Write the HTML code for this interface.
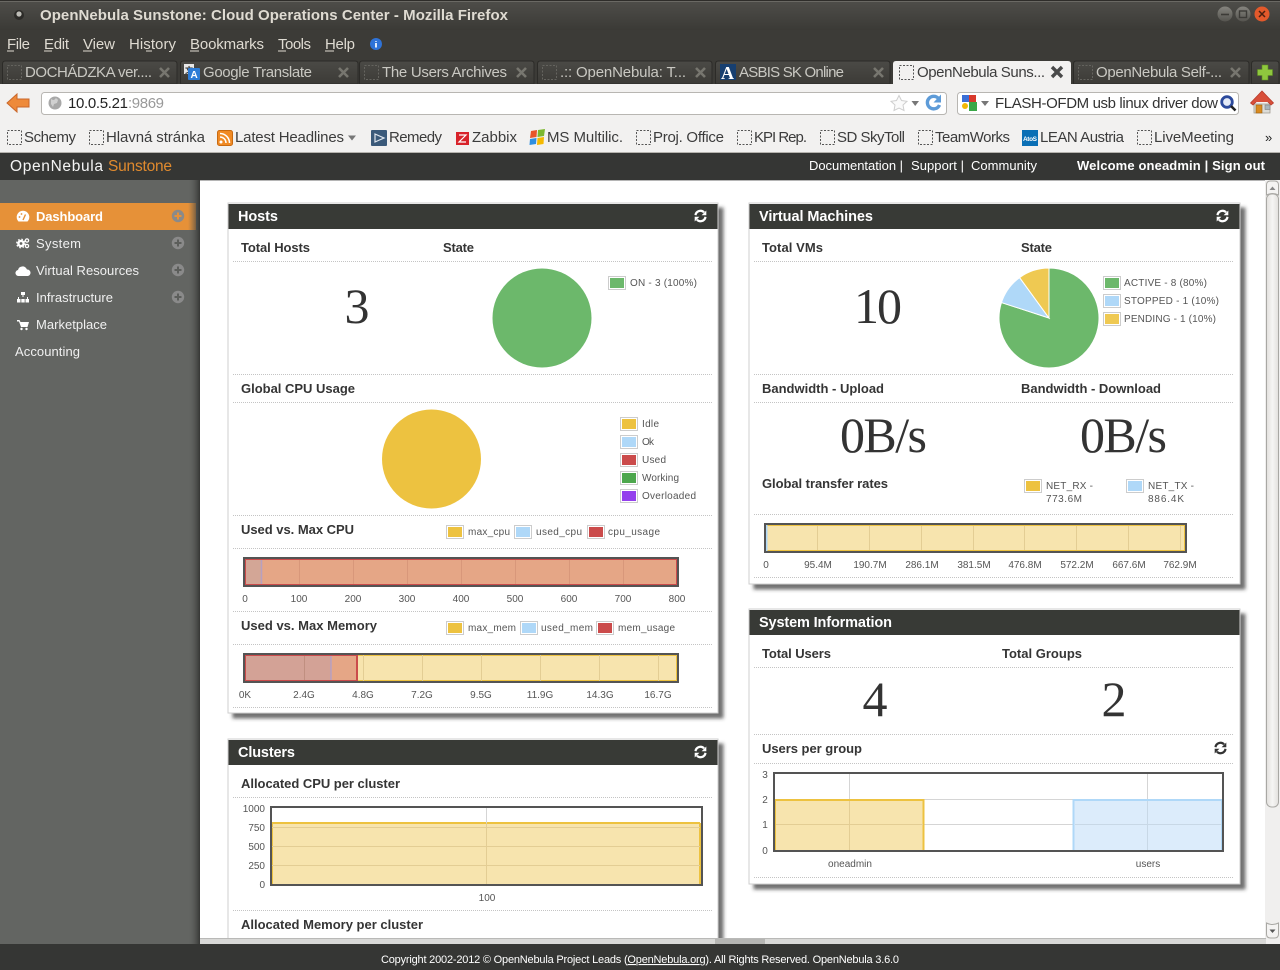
<!DOCTYPE html>
<html><head><meta charset="utf-8"><title>OpenNebula Sunstone: Cloud Operations Center - Mozilla Firefox</title>
<style>
html,body{margin:0;padding:0;background:#fff;overflow:hidden}
svg{display:block}
text{font-family:"Liberation Sans",sans-serif}
.ch{font-size:15px;fill:#dfdbd2}
.tb{font-size:15px;fill:#c9c8c2}
.bm{font-size:15px;fill:#3c3c3c}
.nav{font-size:13px;fill:#f0f0f0}
.hl{font-size:13px;fill:#fff}
.tt{font-size:14.5px;font-weight:bold;fill:#fff}
.sh{font-size:13px;font-weight:bold;fill:#353535}
.lb{font-size:10px;fill:#555}
.mid{text-anchor:middle}
.big{font-family:"Liberation Serif",serif;font-size:50px;fill:#333}
.dot{stroke:#c4c4c4;stroke-width:1;stroke-dasharray:1 1;fill:none}
.sw{fill:#fff;stroke:#ccc;stroke-width:1}
.dash{fill:none;stroke:#555;stroke-width:1;stroke-dasharray:2 1.5}
.dashd{fill:none;stroke:#65645f;stroke-width:1;stroke-dasharray:2 1.5}
.x{stroke:#77766f;stroke-width:2.6;stroke-linecap:butt}
</style></head><body>
<svg xmlns="http://www.w3.org/2000/svg" width="1280" height="970" viewBox="0 0 1280 970">
<defs>
<linearGradient id="tbg" x1="0" y1="0" x2="0" y2="1"><stop offset="0" stop-color="#4f4e4a"/><stop offset="1" stop-color="#3b3a36"/></linearGradient>
<linearGradient id="sd" x1="0" y1="0" x2="1" y2="0"><stop offset="0" stop-color="#636562" stop-opacity="0"/><stop offset="1" stop-color="#353634"/></linearGradient>
<linearGradient id="ti" x1="0" y1="0" x2="0" y2="1"><stop offset="0" stop-color="#4b4a46"/><stop offset="1" stop-color="#3c3b37"/></linearGradient>
<linearGradient id="sb" x1="0" y1="0" x2="1" y2="0"><stop offset="0" stop-color="#e2e0dd"/><stop offset=".5" stop-color="#f6f5f4"/><stop offset="1" stop-color="#e2e0dd"/></linearGradient>
<linearGradient id="btn" x1="0" y1="0" x2="0" y2="1"><stop offset="0" stop-color="#85847e"/><stop offset="1" stop-color="#55544f"/></linearGradient>
<filter id="s" x="-5%" y="-5%" width="110%" height="110%"><feDropShadow dx="5" dy="5" stdDeviation="1.800" flood-color="#333" flood-opacity=".7"/></filter>
<g id="rf"><path d="M-5 -.8A5 5 0 0 1 3.600 -3.600" fill="none" stroke-width="2.200" stroke="currentColor"/><path d="M5.800 -5.500V-.8H1.100Z" fill="currentColor"/><path d="M5 .8A5 5 0 0 1 -3.600 3.600" fill="none" stroke-width="2.200" stroke="currentColor"/><path d="M-5.800 5.500V.8H-1.100Z" fill="currentColor"/></g>
<g id="pl"><circle r="6.200" fill="#8a8a8a"/><path d="M-3.500 0H3.500M0 -3.500V3.500" stroke="#5c5e5b" stroke-width="2"/></g>
</defs>

<!-- Window chrome -->
<rect width="1280" height="84" fill="#3c3b37"/>
<rect y="0" width="1280" height="30" fill="url(#tbg)"/>
<rect y="0" width="1280" height="1" fill="#2e2d2a"/>
<rect y="1" width="1280" height="1" fill="#6a6964"/>
<circle cx="19" cy="15" r="5" fill="#2c2b28"/><circle cx="19" cy="14" r="2.600" fill="#bdbcb6"/>
<text x="40" y="20" textLength="468" style="font-size:15px;font-weight:bold;fill:#dfdbd2">OpenNebula Sunstone: Cloud Operations Center - Mozilla Firefox</text>
<circle cx="1225" cy="14" r="7.500" fill="url(#btn)"/><path d="M1221 14.500H1229" stroke="#3c3b37" stroke-width="1.600"/>
<circle cx="1243" cy="14" r="7.500" fill="url(#btn)"/><rect x="1239.500" y="11" width="7" height="6.500" fill="none" stroke="#3c3b37" stroke-width="1.400"/>
<circle cx="1262" cy="14" r="7.500" fill="#e2592b"/><path d="M1259 11L1265 17M1265 11L1259 17" stroke="#4a2010" stroke-width="1.500"/>

<text x="7" y="49" class="ch" textLength="23">File</text><path d="M7 51H14" stroke="#dfdbd2"/>
<text x="44" y="49" class="ch" textLength="25">Edit</text><path d="M44 51H52" stroke="#dfdbd2"/>
<text x="83" y="49" class="ch" textLength="32">View</text><path d="M83 51H92" stroke="#dfdbd2"/>
<text x="129" y="49" class="ch" textLength="47">History</text><path d="M146 51H152" stroke="#dfdbd2"/>
<text x="190" y="49" class="ch" textLength="74">Bookmarks</text><path d="M190 51H199" stroke="#dfdbd2"/>
<text x="278" y="49" class="ch" textLength="33">Tools</text><path d="M278 51H286" stroke="#dfdbd2"/>
<text x="325" y="49" class="ch" textLength="30">Help</text><path d="M325 51H334" stroke="#dfdbd2"/>
<circle cx="376" cy="44" r="6" fill="#2f73d8"/><path d="M376 41V41.800M376 43V47.500" stroke="#fff" stroke-width="1.700"/>

<!-- Tabs -->
<g stroke="#2c2b28" stroke-width="1" fill="url(#ti)">
<path d="M2.500 84V64q0-3 3-3H174q3 0 3 3V84Z"/>
<path d="M180.500 84V64q0-3 3-3H355q3 0 3 3V84Z"/>
<path d="M359.500 84V64q0-3 3-3H531q3 0 3 3V84Z"/>
<path d="M537.500 84V64q0-3 3-3H709q3 0 3 3V84Z"/>
<path d="M715.500 84V64q0-3 3-3H887q3 0 3 3V84Z"/>
<path d="M1073.500 84V64q0-3 3-3H1246q3 0 3 3V84Z"/>
<path d="M1251.500 84V64q0-3 3-3H1276q3 0 3 3V84Z"/>
</g>
<path d="M893 84V64q0-3 3-3H1068q3 0 3 3V84Z" fill="#f2f1f0"/>
<rect x="7.500" y="65.500" width="14" height="14" class="dashd"/>
<rect x="364.500" y="65.500" width="14" height="14" class="dashd"/>
<rect x="542.500" y="65.500" width="14" height="14" class="dashd"/>
<rect x="1078.500" y="65.500" width="14" height="14" class="dashd"/>
<rect x="899.500" y="65.500" width="14" height="14" class="dash"/>
<text x="25" y="77" class="tb" textLength="127">DOCHÁDZKA ver....</text>
<text x="203" y="77" class="tb" textLength="109">Google Translate</text>
<text x="382" y="77" class="tb" textLength="125">The Users Archives</text>
<text x="560" y="77" class="tb" textLength="126">.:: OpenNebula: T...</text>
<text x="739" y="77" class="tb" textLength="105">ASBIS SK Online</text>
<text x="917" y="77" textLength="128" style="font-size:15px;fill:#3c3c3c">OpenNebula Suns...</text>
<text x="1096" y="77" class="tb" textLength="126">OpenNebula Self-...</text>
<g class="x">
<path d="M160 68L169 77M169 68L160 77"/><path d="M339 68L348 77M348 68L339 77"/><path d="M517 68L526 77M526 68L517 77"/><path d="M696 68L705 77M705 68L696 77"/><path d="M874 68L883 77M883 68L874 77"/><path d="M1231 68L1240 77M1240 68L1231 77"/>
</g>
<path d="M1052 67L1062 77M1062 67L1052 77" stroke="#4a4a4a" stroke-width="3.400"/>
<!-- translate icon -->
<rect x="184" y="64" width="10" height="10" fill="#e8e8e8"/><text x="185" y="73" style="font-family:'Noto Sans CJK SC',sans-serif;font-size:8px;fill:#333;font-weight:bold">文</text>
<rect x="188" y="68" width="12" height="12" rx="1" fill="#2d7cd6"/><text x="190.500" y="78" style="font-size:10px;font-weight:bold;fill:#fff">A</text>
<!-- ASBIS icon -->
<rect x="720" y="64" width="16" height="16" fill="#173f70"/><text x="721" y="79" style="font-family:'Liberation Serif',serif;font-size:18px;font-weight:bold;fill:#fff">A</text>
<!-- plus -->
<path d="M1262 65H1268V69.500H1272.500V75.500H1268V80H1262V75.500H1257.500V69.500H1262Z" fill="#8fc73e" stroke="#5f8f20" stroke-width=".6"/>

<!-- Nav bar -->
<rect y="84" width="1280" height="69" fill="#f2f1f0"/>
<path d="M7 103L17 94V99H29V107H17V112Z" fill="#ee8a3a" stroke="#c9662a" stroke-width="1"/>
<rect x="41.500" y="92.500" width="905" height="22" rx="3" fill="#fff" stroke="#b8b6b2"/>
<circle cx="55" cy="103" r="6.500" fill="#a8a8a8"/><path d="M51 99q3 2 4 0t3 1l-1 3-3 1-1 3-2-3Z" fill="#d0d0d0"/>
<text x="68" y="108" textLength="60" style="font-size:15px;fill:#222">10.0.5.21</text>
<text x="128" y="108" textLength="36" style="font-size:15px;fill:#999">:9869</text>
<path d="M899 95.500L901.500 100.500L907 101.300L903 105L904 110.500L899 108L894 110.500L895 105L891 101.300L896.500 100.500Z" fill="#fafafa" stroke="#cfcfcf"/>
<path d="M911.500 101H919L915.200 106Z" fill="#777"/>
<path d="M938.500 98.500A6.300 6.300 0 1 0 939.500 105" fill="none" stroke="#5d9bd8" stroke-width="3.400"/>
<path d="M941 94.500V102.500H933.500Z" fill="#5d9bd8"/>
<rect x="957.500" y="92.500" width="281" height="22" rx="3" fill="#fff" stroke="#b8b6b2"/>
<rect x="962" y="95" width="7" height="7" fill="#3b6fd6"/><rect x="969" y="95" width="7" height="7" fill="#d8392b"/><circle cx="965" cy="106" r="3" fill="#f2b705"/><rect x="969" y="102" width="8" height="9" fill="#3aa847"/>
<path d="M981 101H989L985 106Z" fill="#777"/>
<text x="995" y="108" textLength="223" style="font-size:15px;fill:#333">FLASH-OFDM usb linux driver dow</text>
<circle cx="1227" cy="102" r="5.300" fill="#e4eaf7" stroke="#2c4a9c" stroke-width="2.800"/><path d="M1231 106L1235.500 110.500" stroke="#222" stroke-width="2.600"/>
<path d="M1254 104V113H1270V104Z" fill="#dcdcd8" stroke="#a09c90" stroke-width=".8"/>
<path d="M1250.500 103L1262 91L1273.500 103L1271 105L1262 96L1253 105Z" fill="#d84f3a" stroke="#b83a2a" stroke-width=".8"/>
<path d="M1262 93.500L1270 102H1254Z" fill="#d84f3a"/>
<rect x="1256" y="105" width="6" height="8" fill="#d98a1e" stroke="#9c6010" stroke-width=".6"/>
<rect x="1265" y="105" width="5" height="4.500" fill="#a8b4bc" stroke="#808080" stroke-width=".6"/>

<!-- Bookmarks -->
<g>
<rect x="7.500" y="130.500" width="14" height="14" class="dash"/><text x="24" y="142" class="bm" textLength="52">Schemy</text>
<rect x="89.500" y="130.500" width="14" height="14" class="dash"/><text x="106" y="142" class="bm" textLength="99">Hlavná stránka</text>
<rect x="217.500" y="130.500" width="15" height="15" rx="2" fill="#f08a24" stroke="#c96a10"/><circle cx="221" cy="142" r="1.500" fill="#fff"/><path d="M220 137a6 6 0 0 1 6 6M220 133.500a9.500 9.500 0 0 1 9.500 9.500" fill="none" stroke="#fff" stroke-width="1.500"/>
<text x="235" y="142" class="bm" textLength="109">Latest Headlines</text><path d="M348 135.500H356L352 140.500Z" fill="#777"/>
<rect x="371" y="130" width="16" height="16" rx="1" fill="#3b5a7a"/><path d="M375 134L384 138L375 142Z" fill="none" stroke="#dfe6ee" stroke-width="1.200"/>
<text x="389" y="142" class="bm" textLength="53">Remedy</text>
<rect x="456" y="132" width="13" height="13" fill="#d8232a"/><path d="M459 135H466L459 142H466" fill="none" stroke="#fff" stroke-width="1.200"/>
<text x="472" y="142" class="bm" textLength="45">Zabbix</text>
<path d="M531 131L537 130L536.500 137L530 138Z" fill="#e8562a"/><path d="M538 130L545 129L544 136L537.500 137Z" fill="#7cb82f"/><path d="M530 139L536.500 138L536 144L529.500 145Z" fill="#2f8fe0"/><path d="M537.500 138L544 137L543.500 144L537 145Z" fill="#f5b900"/>
<text x="547" y="142" class="bm" textLength="76">MS Multilic.</text>
<rect x="636.500" y="130.500" width="14" height="14" class="dash"/><text x="653" y="142" class="bm" textLength="71">Proj. Office</text>
<rect x="737.500" y="130.500" width="14" height="14" class="dash"/><text x="754" y="142" class="bm" textLength="53">KPI Rep.</text>
<rect x="820.500" y="130.500" width="14" height="14" class="dash"/><text x="837" y="142" class="bm" textLength="68">SD SkyToll</text>
<rect x="918.500" y="130.500" width="14" height="14" class="dash"/><text x="935" y="142" class="bm" textLength="75">TeamWorks</text>
<rect x="1022" y="130" width="16" height="16" fill="#0a6fb5"/><text x="1023" y="141" textLength="14" style="font-size:6.500px;font-weight:bold;fill:#fff">AtoS</text>
<text x="1040" y="142" class="bm" textLength="84">LEAN Austria</text>
<rect x="1137.500" y="130.500" width="14" height="14" class="dash"/><text x="1154" y="142" class="bm" textLength="80">LiveMeeting</text>
<text x="1265" y="142" style="font-size:13px;fill:#222">»</text>
</g>
<rect y="152" width="1280" height="1" fill="#b5b3ae"/>

<!-- Sunstone header -->
<rect y="153" width="1280" height="27" fill="#353634"/>
<text x="10" y="171" textLength="93" style="font-size:15.500px;fill:#f4f4f4">OpenNebula</text>
<text x="108" y="171" textLength="64" style="font-size:15.500px;fill:#e08a2e">Sunstone</text>
<text x="809" y="170" class="hl" textLength="94">Documentation |</text>
<text x="911" y="170" class="hl" textLength="53">Support |</text>
<text x="971" y="170" class="hl" textLength="66">Community</text>
<text x="1077" y="170" class="hl" textLength="188" style="font-weight:bold">Welcome oneadmin | Sign out</text>

<!-- Main + sidebar -->
<rect x="200" y="180" width="1066" height="760" fill="#fff"/>
<rect x="200" y="180" width="1066" height="1" fill="#b5b5b5"/>
<rect y="180" width="200" height="764" fill="#636562"/>
<rect y="203" width="196" height="27" fill="#e69138"/>
<rect x="188" y="180" width="12" height="764" fill="url(#sd)"/>
<text x="36" y="221" textLength="67" class="nav" style="font-weight:bold;fill:#fff">Dashboard</text>
<text x="36" y="248" textLength="45" class="nav">System</text>
<text x="36" y="275" textLength="103" class="nav">Virtual Resources</text>
<text x="36" y="302" textLength="77" class="nav">Infrastructure</text>
<text x="36" y="329" textLength="71" class="nav">Marketplace</text>
<text x="15" y="356" textLength="65" class="nav">Accounting</text>
<g><circle cx="178" cy="216" r="6.200" fill="#8a8a8a"/><path d="M174.500 216H181.500M178 212.500V219.500" stroke="#e69138" stroke-width="2"/></g>
<use href="#pl" x="178" y="243"/><use href="#pl" x="178" y="270"/><use href="#pl" x="178" y="297"/>
<!-- sidebar icons -->
<path d="M18.500 221.500A6.300 6.300 0 1 1 27.500 221.500Z" fill="#fff"/><path d="M23 220L25.500 214.500" stroke="#e69138" stroke-width="1.400"/><circle cx="19.500" cy="217" r=".9" fill="#e69138"/><circle cx="21.500" cy="214" r=".9" fill="#e69138"/>
<circle cx="21" cy="243.500" r="2.600" fill="none" stroke="#fff" stroke-width="2.400"/><circle cx="21" cy="243.500" r="4.300" fill="none" stroke="#fff" stroke-width="1.200" stroke-dasharray="1.700 1.700"/><circle cx="27" cy="240.500" r="1.600" fill="none" stroke="#fff" stroke-width="1.300"/><circle cx="27" cy="246" r="1.600" fill="none" stroke="#fff" stroke-width="1.300"/>
<path d="M19 276a3 3 0 0 1-1-6a4.500 4.500 0 0 1 4-3.500a4.500 4.500 0 0 1 5 3a3.300 3.300 0 0 1 1 6.500Z" fill="#fff"/>
<path d="M21 292H25V295H21ZM22.500 295H23.500V297H28V299H27V297H19V299H18V297H22.500Z" fill="#fff"/><path d="M17 299H20.500V302.500H17ZM21.300 299H24.700V302.500H21.300ZM25.500 299H29V302.500H25.500Z" fill="#fff"/>
<path d="M17 320H19.500L20.500 322H29L27.500 327H21L19 321.500H17Z" fill="#fff"/><circle cx="21.500" cy="329" r="1.200" fill="#fff"/><circle cx="26.500" cy="329" r="1.200" fill="#fff"/>

<!-- Hosts -->
<rect x="228" y="203" width="490" height="510" fill="#fff" stroke="#cfcfcf" filter="url(#s)"/>
<rect x="228.500" y="204" width="489" height="25" fill="#383a36"/>
<text x="238" y="221" class="tt" textLength="40">Hosts</text>
<g transform="translate(700.500 216)" style="color:#fff"><use href="#rf"/></g>
<text x="241" y="252" class="sh" textLength="69">Total Hosts</text>
<text x="443" y="252" class="sh" textLength="31">State</text>
<path class="dot" d="M233 261.500H712M233 374.500H712M233 402.500H712M233 515.500H712M233 548.500H712M233 611.500H712M233 644.500H712M233 707.500H712"/>
<text x="357" y="323" class="big mid" textLength="24">3</text>
<circle cx="542" cy="318" r="49.500" fill="#6cb86b"/>
<rect x="608.500" y="276.500" width="17" height="13" class="sw"/><rect x="610" y="278" width="14" height="10" fill="#6cb86b"/>
<text x="630" y="286" class="lb" textLength="67">ON - 3 (100%)</text>
<text x="241" y="393" class="sh" textLength="114">Global CPU Usage</text>
<circle cx="431.500" cy="459" r="49.500" fill="#edc240"/>
<g>
<rect x="620.500" y="417.500" width="17" height="13" class="sw"/><rect x="622" y="419" width="14" height="10" fill="#edc240"/>
<rect x="620.500" y="435.500" width="17" height="13" class="sw"/><rect x="622" y="437" width="14" height="10" fill="#afd8f8"/>
<rect x="620.500" y="453.500" width="17" height="13" class="sw"/><rect x="622" y="455" width="14" height="10" fill="#cb4b4b"/>
<rect x="620.500" y="471.500" width="17" height="13" class="sw"/><rect x="622" y="473" width="14" height="10" fill="#4da74d"/>
<rect x="620.500" y="489.500" width="17" height="13" class="sw"/><rect x="622" y="491" width="14" height="10" fill="#9440ed"/>
</g>
<text x="642" y="427" class="lb" textLength="17">Idle</text>
<text x="642" y="445" class="lb" textLength="12">Ok</text>
<text x="642" y="463" class="lb" textLength="24">Used</text>
<text x="642" y="481" class="lb" textLength="37">Working</text>
<text x="642" y="499" class="lb" textLength="54">Overloaded</text>

<text x="241" y="534" class="sh" textLength="113">Used vs. Max CPU</text>
<rect x="446.500" y="525.500" width="17" height="13" class="sw"/><rect x="448" y="527" width="14" height="10" fill="#edc240"/>
<text x="468" y="535" class="lb" textLength="42">max_cpu</text>
<rect x="514.500" y="525.500" width="17" height="13" class="sw"/><rect x="516" y="527" width="14" height="10" fill="#afd8f8"/>
<text x="536" y="535" class="lb" textLength="46">used_cpu</text>
<rect x="587.500" y="525.500" width="17" height="13" class="sw"/><rect x="589" y="527" width="14" height="10" fill="#cb4b4b"/>
<text x="608" y="535" class="lb" textLength="52">cpu_usage</text>
<!-- CPU bar -->
<rect x="244" y="558" width="434" height="28" fill="#e5a686"/>
<rect x="245" y="560" width="17" height="24" fill="#d3a696"/>
<path d="M261.500 560V584" stroke="#b8a0c0" stroke-width="1.500"/>
<path d="M299.500 559V585M353.500 559V585M407.500 559V585M461.500 559V585M515.500 559V585M569.500 559V585M623.500 559V585" stroke="#d8977a"/>
<rect x="245" y="559" width="432" height="26" fill="none" stroke="#cb4b4b" stroke-width="2"/>
<rect x="244" y="558" width="434" height="28" fill="none" stroke="#545454" stroke-width="2"/>
<g class="lb mid">
<text x="245" y="602">0</text><text x="299" y="602">100</text><text x="353" y="602">200</text><text x="407" y="602">300</text><text x="461" y="602">400</text><text x="515" y="602">500</text><text x="569" y="602">600</text><text x="623" y="602">700</text><text x="677" y="602">800</text>
</g>

<text x="241" y="630" class="sh" textLength="136">Used vs. Max Memory</text>
<rect x="446.500" y="621.500" width="17" height="13" class="sw"/><rect x="448" y="623" width="14" height="10" fill="#edc240"/>
<text x="468" y="631" class="lb" textLength="48">max_mem</text>
<rect x="520.500" y="621.500" width="17" height="13" class="sw"/><rect x="522" y="623" width="14" height="10" fill="#afd8f8"/>
<text x="541" y="631" class="lb" textLength="52">used_mem</text>
<rect x="596.500" y="621.500" width="17" height="13" class="sw"/><rect x="598" y="623" width="14" height="10" fill="#cb4b4b"/>
<text x="618" y="631" class="lb" textLength="57">mem_usage</text>
<!-- Mem bar -->
<rect x="244" y="654" width="434" height="28" fill="#f7e4ae"/>
<rect x="245" y="655" width="432" height="26" fill="none" stroke="#edc240" stroke-width="2"/>
<rect x="245" y="655" width="112" height="26" fill="#e5a686"/>
<rect x="245" y="656" width="86" height="24" fill="#d3a296"/>
<path d="M331 656V680" stroke="#b8a0c0" stroke-width="1.500"/>
<path d="M304.500 655V681" stroke="#c08f80"/>
<path d="M363.500 655V681M422.500 655V681M481.500 655V681M540.500 655V681M599.500 655V681M658.500 655V681" stroke="#e3cd94"/>
<rect x="245" y="655" width="112" height="26" fill="none" stroke="#cb4b4b" stroke-width="2"/>
<rect x="244" y="654" width="434" height="28" fill="none" stroke="#545454" stroke-width="2"/>
<g class="lb mid">
<text x="245" y="698">0K</text><text x="304" y="698">2.4G</text><text x="363" y="698">4.8G</text><text x="422" y="698">7.2G</text><text x="481" y="698">9.5G</text><text x="540" y="698">11.9G</text><text x="600" y="698">14.3G</text><text x="658" y="698">16.7G</text>
</g>

<!-- Clusters -->
<rect x="228" y="739" width="490" height="260" fill="#fff" stroke="#cfcfcf" filter="url(#s)"/>
<rect x="228.500" y="740" width="489" height="25" fill="#383a36"/>
<text x="238" y="757" class="tt" textLength="57">Clusters</text>
<g transform="translate(700.500 752)" style="color:#fff"><use href="#rf"/></g>
<text x="241" y="788" class="sh" textLength="159">Allocated CPU per cluster</text>
<path class="dot" d="M233 797.500H712M233 910.500H712"/>
<rect x="271" y="807" width="430" height="78" fill="#fff"/>
<rect x="272" y="823" width="428" height="62" fill="#f7e4ae"/>
<path d="M272 823H700M272 823V885M700 823V885" fill="none" stroke="#edc240" stroke-width="2"/>
<path d="M486.500 807V823" stroke="#d5d5d5"/>
<path d="M486.500 823V885M272 827.500H700M272 846.500H700M272 865.500H700" stroke="#e3cd94"/>
<rect x="271" y="807" width="431" height="78" fill="none" stroke="#545454" stroke-width="2"/>
<g class="lb" style="text-anchor:end">
<text x="265" y="812">1000</text><text x="265" y="831">750</text><text x="265" y="850">500</text><text x="265" y="869">250</text><text x="265" y="888">0</text>
</g>
<text x="487" y="901" class="lb mid">100</text>
<text x="241" y="929" class="sh" textLength="182">Allocated Memory per cluster</text>

<!-- Virtual Machines -->
<rect x="749" y="203" width="491" height="381" fill="#fff" stroke="#cfcfcf" filter="url(#s)"/>
<rect x="749.500" y="204" width="490" height="25" fill="#383a36"/>
<text x="759" y="221" class="tt" textLength="114">Virtual Machines</text>
<g transform="translate(1222.500 216)" style="color:#fff"><use href="#rf"/></g>
<text x="762" y="252" class="sh" textLength="61">Total VMs</text>
<text x="1021" y="252" class="sh" textLength="31">State</text>
<path class="dot" d="M754 261.500H1233M754 374.500H1233M754 402.500H1233M754 514.500H1233M754 577.500H1233"/>
<text x="878" y="323" class="big mid" textLength="48">10</text>
<g stroke="#fff" stroke-width="1">
<path d="M1049 318V268A50 50 0 1 1 1001.450 302.550Z" fill="#6cb86b"/>
<path d="M1049 318L1001.450 302.550A50 50 0 0 1 1019.600 277.550Z" fill="#afd8f8"/>
<path d="M1049 318L1019.600 277.550A50 50 0 0 1 1049 268Z" fill="#efc952"/>
</g>
<rect x="1103.500" y="276.500" width="17" height="13" class="sw"/><rect x="1105" y="278" width="14" height="10" fill="#6cb86b"/>
<rect x="1103.500" y="294.500" width="17" height="13" class="sw"/><rect x="1105" y="296" width="14" height="10" fill="#afd8f8"/>
<rect x="1103.500" y="312.500" width="17" height="13" class="sw"/><rect x="1105" y="314" width="14" height="10" fill="#efc952"/>
<text x="1124" y="286" class="lb" textLength="83">ACTIVE - 8 (80%)</text>
<text x="1124" y="304" class="lb" textLength="95">STOPPED - 1 (10%)</text>
<text x="1124" y="322" class="lb" textLength="92">PENDING - 1 (10%)</text>
<text x="762" y="393" class="sh" textLength="122">Bandwidth - Upload</text>
<text x="1021" y="393" class="sh" textLength="140">Bandwidth - Download</text>
<text x="840" y="452" class="big" textLength="87">0B/s</text>
<text x="1080" y="452" class="big" textLength="87">0B/s</text>
<text x="762" y="488" class="sh" textLength="126">Global transfer rates</text>
<rect x="1024.500" y="479.500" width="17" height="13" class="sw"/><rect x="1026" y="481" width="14" height="10" fill="#edc240"/>
<text x="1046" y="489" class="lb" textLength="47">NET_RX -</text><text x="1046" y="502" class="lb" textLength="36">773.6M</text>
<rect x="1126.500" y="479.500" width="17" height="13" class="sw"/><rect x="1128" y="481" width="14" height="10" fill="#afd8f8"/>
<text x="1148" y="489" class="lb" textLength="46">NET_TX -</text><text x="1148" y="502" class="lb" textLength="36">886.4K</text>
<!-- net bar -->
<rect x="765" y="524" width="421" height="28" fill="#f7e4ae"/>
<path d="M817.500 525V551M869.500 525V551M921.500 525V551M973.500 525V551M1024.500 525V551M1076.500 525V551M1128.500 525V551M1180.500 525V551" stroke="#e3cd94"/>
<rect x="766" y="525" width="419" height="26" fill="none" stroke="#edc240" stroke-width="2"/>
<path d="M766.500 525V551" stroke="#afd8f8" stroke-width="2"/>
<rect x="765" y="524" width="421" height="28" fill="none" stroke="#545454" stroke-width="2"/>
<g class="lb mid">
<text x="766" y="568">0</text><text x="818" y="568">95.4M</text><text x="870" y="568">190.7M</text><text x="922" y="568">286.1M</text><text x="974" y="568">381.5M</text><text x="1025" y="568">476.8M</text><text x="1077" y="568">572.2M</text><text x="1129" y="568">667.6M</text><text x="1180" y="568">762.9M</text>
</g>

<!-- System Information -->
<rect x="749" y="609" width="491" height="275" fill="#fff" stroke="#cfcfcf" filter="url(#s)"/>
<rect x="749.500" y="610" width="490" height="25" fill="#383a36"/>
<text x="759" y="627" class="tt" textLength="133">System Information</text>
<text x="762" y="658" class="sh" textLength="69">Total Users</text>
<text x="1002" y="658" class="sh" textLength="80">Total Groups</text>
<path class="dot" d="M754 667.500H1233M754 734.500H1233M754 763.500H1233M754 877.500H1233"/>
<text x="875" y="716" class="big mid" textLength="25">4</text>
<text x="1114" y="716" class="big mid" textLength="25">2</text>
<text x="762" y="753" class="sh" textLength="100">Users per group</text>
<g transform="translate(1220.500 748)" style="color:#333"><use href="#rf"/></g>
<path d="M774 799.500H1223M774 824.500H1223M849.500 773V851M1147.500 773V851" stroke="#d5d5d5"/>
<rect x="775" y="799" width="149" height="52" fill="#f7e4ae"/>
<path d="M775 851V800H923.500V851" fill="none" stroke="#edc240" stroke-width="2"/>
<rect x="1073" y="799" width="149" height="52" fill="#dcecfb"/>
<path d="M1073.500 851V800H1222V851" fill="none" stroke="#afd8f8" stroke-width="2"/>
<path d="M776 824.500H923M849.500 801V851" stroke="#e3cd94"/>
<path d="M1075 824.500H1221M1147.500 801V851" stroke="#c8d8e6"/>
<rect x="774" y="773" width="449" height="78" fill="none" stroke="#545454" stroke-width="2"/>
<g class="lb mid">
<text x="765" y="778">3</text><text x="765" y="803">2</text><text x="765" y="828">1</text><text x="765" y="854">0</text>
<text x="850" y="867">oneadmin</text><text x="1148" y="867">users</text>
</g>

<!-- Scrollbars -->
<rect x="1265" y="180" width="15" height="764" fill="#f0efee"/>
<path d="M1266.500 195V185q0-4 4-4h4q4 0 4 4V195q-6 -3 -12 0Z" fill="#f4f3f2" stroke="#a9a8a4"/>
<path d="M1269.500 190H1275.500L1272.500 186.500Z" fill="#888"/>
<rect x="1266.500" y="194" width="12" height="613" rx="5" fill="url(#sb)" stroke="#a9a8a4"/>
<path d="M1266.500 923q6 3 12 0V934q0 4-4 4h-4q-4 0-4-4Z" fill="#f4f3f2" stroke="#a9a8a4"/>
<path d="M1269.500 929.500H1275.500L1272.500 933Z" fill="#555"/>
<rect x="200" y="938" width="1066" height="6" fill="#d8d8d6"/>
<rect x="200" y="938" width="1066" height="1" fill="#b9b9b7"/>
<rect x="715" y="939" width="50" height="5" fill="#b5b5b3"/>

<!-- Footer -->
<rect y="944" width="1280" height="26" fill="#353634"/>
<text x="381" y="963" textLength="518" style="font-size:11px;fill:#fff">Copyright 2002-2012 © OpenNebula Project Leads (<tspan text-decoration="underline">OpenNebula.org</tspan>). All Rights Reserved. OpenNebula 3.6.0</text>
</svg>
</body></html>
